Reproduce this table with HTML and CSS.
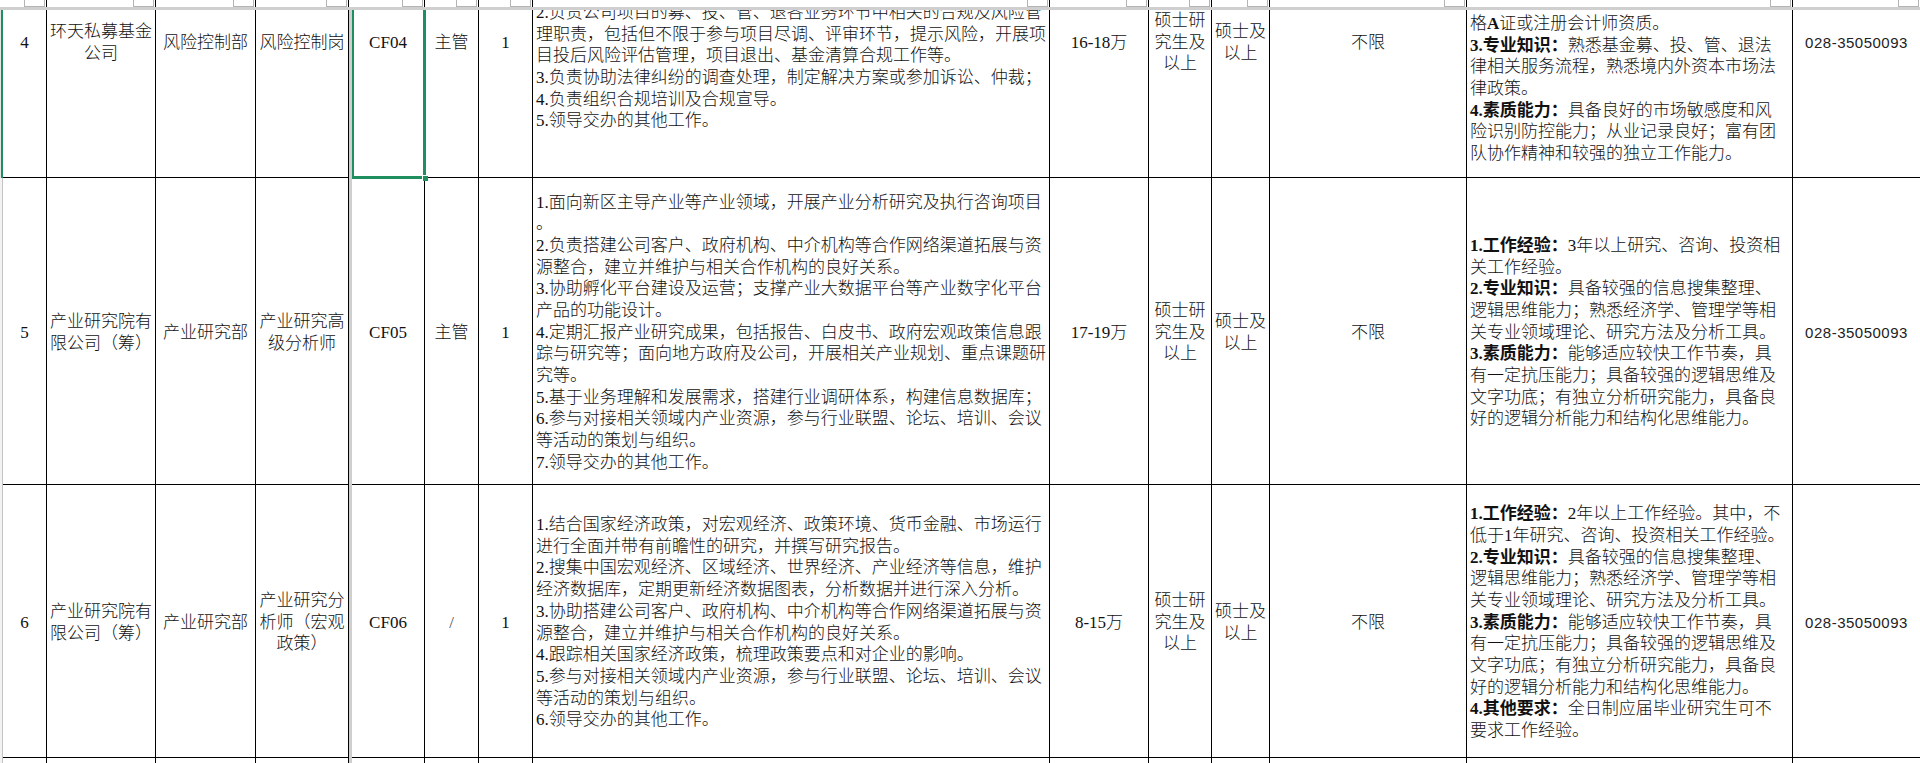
FILE: index.html
```html
<!DOCTYPE html>
<html lang="zh-CN">
<head>
<meta charset="utf-8">
<title>招聘岗位表</title>
<link rel="stylesheet" href="styles.css">
</head>
<body>
<div class="sheet">
  <!-- frozen header strip (cut) -->
  <div class="top edge0"></div>
  <div class="top"><span class="fb"></span></div>
  <div class="top"><span class="fb"></span></div>
  <div class="top"><span class="fb"></span></div>
  <div class="top"><span class="fb"></span></div>
  <div class="top gap"></div>
  <div class="top"><span class="fb"></span></div>
  <div class="top"><span class="fb"></span></div>
  <div class="top"><span class="fb"></span></div>
  <div class="top"><span class="fb"></span></div>
  <div class="top"><span class="fb"></span></div>
  <div class="top"><span class="fb"></span></div>
  <div class="top"><span class="fb"></span></div>
  <div class="top"><span class="fb"></span></div>
  <div class="top"><span class="fb"></span></div>
  <div class="top"><span class="fb fb-last"></span></div>

  <div class="hdiv"></div>
  <div class="vdiv"></div>

  <!-- row 4 -->
  <div class="edge edge-sel"></div>
  <div class="c r4">4</div>
  <div class="c r4"><div>环天私募基金<br>公司</div></div>
  <div class="c r4">风险控制部</div>
  <div class="c r4">风险控制岗</div>
  <div class="c r4 selcell">CF04<span class="sel"></span><span class="handle"></span></div>
  <div class="c r4">主管</div>
  <div class="c r4">1</div>
  <div class="c t r4t"><div class="txt d4">2.负责公司项目的募、投、管、退各业务环节中相关的合规及风险管<br>理职责，包括但不限于参与项目尽调、评审环节，提示风险，开展项<br>目投后风险评估管理，项目退出、基金清算合规工作等。<br>3.负责协助法律纠纷的调查处理，制定解决方案或参加诉讼、仲裁；<br>4.负责组织合规培训及合规宣导。<br>5.领导交办的其他工作。</div></div>
  <div class="c r4">16-18万</div>
  <div class="c r4"><div>硕士研<br>究生及<br>以上</div></div>
  <div class="c r4"><div>硕士及<br>以上</div></div>
  <div class="c r4">不限</div>
  <div class="c t r4t"><div class="txt q4">格<b>A</b>证或注册会计师资质。<br><b>3.专业知识：</b>熟悉基金募、投、管、退法<br>律相关服务流程，熟悉境内外资本市场法<br>律政策。<br><b>4.素质能力：</b>具备良好的市场敏感度和风<br>险识别防控能力；从业记录良好；富有团<br>队协作精神和较强的独立工作能力。</div></div>
  <div class="c r4 ph">028-35050093</div>

  <!-- row 5 -->
  <div class="edge"></div>
  <div class="c rr">5</div>
  <div class="c rr"><div>产业研究院有<br>限公司（筹）</div></div>
  <div class="c rr">产业研究部</div>
  <div class="c rr"><div>产业研究高<br>级分析师</div></div>
  <div class="c rr">CF05</div>
  <div class="c rr">主管</div>
  <div class="c rr">1</div>
  <div class="c t rr"><div class="txt">1.面向新区主导产业等产业领域，开展产业分析研究及执行咨询项目<br>。<br>2.负责搭建公司客户、政府机构、中介机构等合作网络渠道拓展与资<br>源整合，建立并维护与相关合作机构的良好关系。<br>3.协助孵化平台建设及运营；支撑产业大数据平台等产业数字化平台<br>产品的功能设计。<br>4.定期汇报产业研究成果，包括报告、白皮书、政府宏观政策信息跟<br>踪与研究等；面向地方政府及公司，开展相关产业规划、重点课题研<br>究等。<br>5.基于业务理解和发展需求，搭建行业调研体系，构建信息数据库；<br>6.参与对接相关领域内产业资源，参与行业联盟、论坛、培训、会议<br>等活动的策划与组织。<br>7.领导交办的其他工作。</div></div>
  <div class="c rr">17-19万</div>
  <div class="c rr"><div>硕士研<br>究生及<br>以上</div></div>
  <div class="c rr"><div>硕士及<br>以上</div></div>
  <div class="c rr">不限</div>
  <div class="c t rr"><div class="txt"><b>1.工作经验：</b>3年以上研究、咨询、投资相<br>关工作经验。<br><b>2.专业知识：</b>具备较强的信息搜集整理、<br>逻辑思维能力；熟悉经济学、管理学等相<br>关专业领域理论、研究方法及分析工具。<br><b>3.素质能力：</b>能够适应较快工作节奏，具<br>有一定抗压能力；具备较强的逻辑思维及<br>文字功底；有独立分析研究能力，具备良<br>好的逻辑分析能力和结构化思维能力。</div></div>
  <div class="c rr ph">028-35050093</div>

  <!-- row 6 -->
  <div class="edge"></div>
  <div class="c rr">6</div>
  <div class="c rr"><div>产业研究院有<br>限公司（筹）</div></div>
  <div class="c rr">产业研究部</div>
  <div class="c rr"><div>产业研究分<br>析师（宏观<br>政策）</div></div>
  <div class="c rr">CF06</div>
  <div class="c rr slash">/</div>
  <div class="c rr">1</div>
  <div class="c t rr"><div class="txt">1.结合国家经济政策，对宏观经济、政策环境、货币金融、市场运行<br>进行全面并带有前瞻性的研究，并撰写研究报告。<br>2.搜集中国宏观经济、区域经济、世界经济、产业经济等信息，维护<br>经济数据库，定期更新经济数据图表，分析数据并进行深入分析。<br>3.协助搭建公司客户、政府机构、中介机构等合作网络渠道拓展与资<br>源整合，建立并维护与相关合作机构的良好关系。<br>4.跟踪相关国家经济政策，梳理政策要点和对企业的影响。<br>5.参与对接相关领域内产业资源，参与行业联盟、论坛、培训、会议<br>等活动的策划与组织。<br>6.领导交办的其他工作。</div></div>
  <div class="c rr">8-15万</div>
  <div class="c rr"><div>硕士研<br>究生及<br>以上</div></div>
  <div class="c rr"><div>硕士及<br>以上</div></div>
  <div class="c rr">不限</div>
  <div class="c t rr"><div class="txt"><b>1.工作经验：</b>2年以上工作经验。其中，不<br>低于1年研究、咨询、投资相关工作经验。<br><b>2.专业知识：</b>具备较强的信息搜集整理、<br>逻辑思维能力；熟悉经济学、管理学等相<br>关专业领域理论、研究方法及分析工具。<br><b>3.素质能力：</b>能够适应较快工作节奏，具<br>有一定抗压能力；具备较强的逻辑思维及<br>文字功底；有独立分析研究能力，具备良<br>好的逻辑分析能力和结构化思维能力。<br><b>4.其他要求：</b>全日制应届毕业研究生可不<br>要求工作经验。</div></div>
  <div class="c rr ph">028-35050093</div>

  <!-- row 7 (cut) -->
  <div class="edge"></div>
  <div class="c last"></div>
  <div class="c last"></div>
  <div class="c last"></div>
  <div class="c last"></div>
  <div class="c last"></div>
  <div class="c last"></div>
  <div class="c last"></div>
  <div class="c last"></div>
  <div class="c last"></div>
  <div class="c last"></div>
  <div class="c last"></div>
  <div class="c last"></div>
  <div class="c last"></div>
  <div class="c last"></div>
</div>
</body>
</html>
```

FILE: styles.css
```css
* { box-sizing: border-box; }

html, body {
  margin: 0;
  padding: 0;
  background: #ffffff;
  overflow: hidden;
}

body {
  width: 1920px;
  height: 763px;
  font-family: "Liberation Serif", "Noto Sans CJK SC", serif;
  font-size: 17px;
  font-weight: 300;
  line-height: 21.67px;
  color: #111;
}

.sheet {
  display: grid;
  grid-template-columns: 3px 44px 109px 100px 93px 3px 73px 54px 54px 517px 99px 63px 58px 197px 326px 128px;
  grid-template-rows: 7px 3px 168px 307px 273px 5px;
  width: 1921px;
  height: 763px;
}

/* frozen header strip */
.top {
  border-right: 1px solid #000;
  display: flex;
  justify-content: flex-end;
  align-items: flex-end;
  background: #fff;
}
.top.edge0, .top.gap { border-right: 0; }
.fb {
  display: block;
  width: 21px;
  height: 7px;
  border: 1px solid #b4b4b4;
  border-top: 0;
  margin-right: 1px;
  background: #fff;
}

.hdiv {
  grid-column: 1 / -1;
  background: #cfcfcf;
}
.vdiv {
  grid-column: 6;
  grid-row: 3 / 7;
  background: #cfcfcf;
}

/* row header edge */
.edge {
  background: #f2f2f2;
  border-right: 1px solid #c4c4c4;
}
.edge-sel {
  background: #e3e3e3;
  border-right: 2px solid #1f8f5f;
}

/* cells */
.c {
  border-right: 1px solid #000;
  border-bottom: 1px solid #000;
  display: flex;
  align-items: center;
  justify-content: center;
  text-align: center;
  overflow: hidden;
  white-space: nowrap;
}
.c.last { border-bottom: 0; }

.rr { padding-top: 3px; }
.r4 { padding-bottom: 102px; }

.t {
  justify-content: flex-start;
  text-align: left;
  padding-left: 3px;
}
.r4t {
  align-items: flex-start;
  padding-bottom: 0;
}
.txt { white-space: nowrap; }
.d4 { margin-top: -8px; }
.q4 { margin-top: 3px; }

b { font-weight: 700; }

.ph {
  font-family: "Liberation Sans", "Noto Sans CJK SC", sans-serif;
  font-size: 15px;
  letter-spacing: 0.5px;
  color: #222;
}
.slash { color: #555; }

/* selection */
.selcell {
  position: relative;
  overflow: visible;
}
.sel {
  position: absolute;
  left: 0;
  right: -2px;
  top: 0;
  bottom: -2px;
  border: 2px solid #1f8f5f;
  border-top: 0;
  border-right-width: 3px;
  border-bottom-width: 3px;
  pointer-events: none;
}
.handle {
  position: absolute;
  right: -4px;
  bottom: -4px;
  width: 6px;
  height: 6px;
  background: #1f8f5f;
  border-left: 1px solid #fff;
  border-top: 1px solid #fff;
}
```
